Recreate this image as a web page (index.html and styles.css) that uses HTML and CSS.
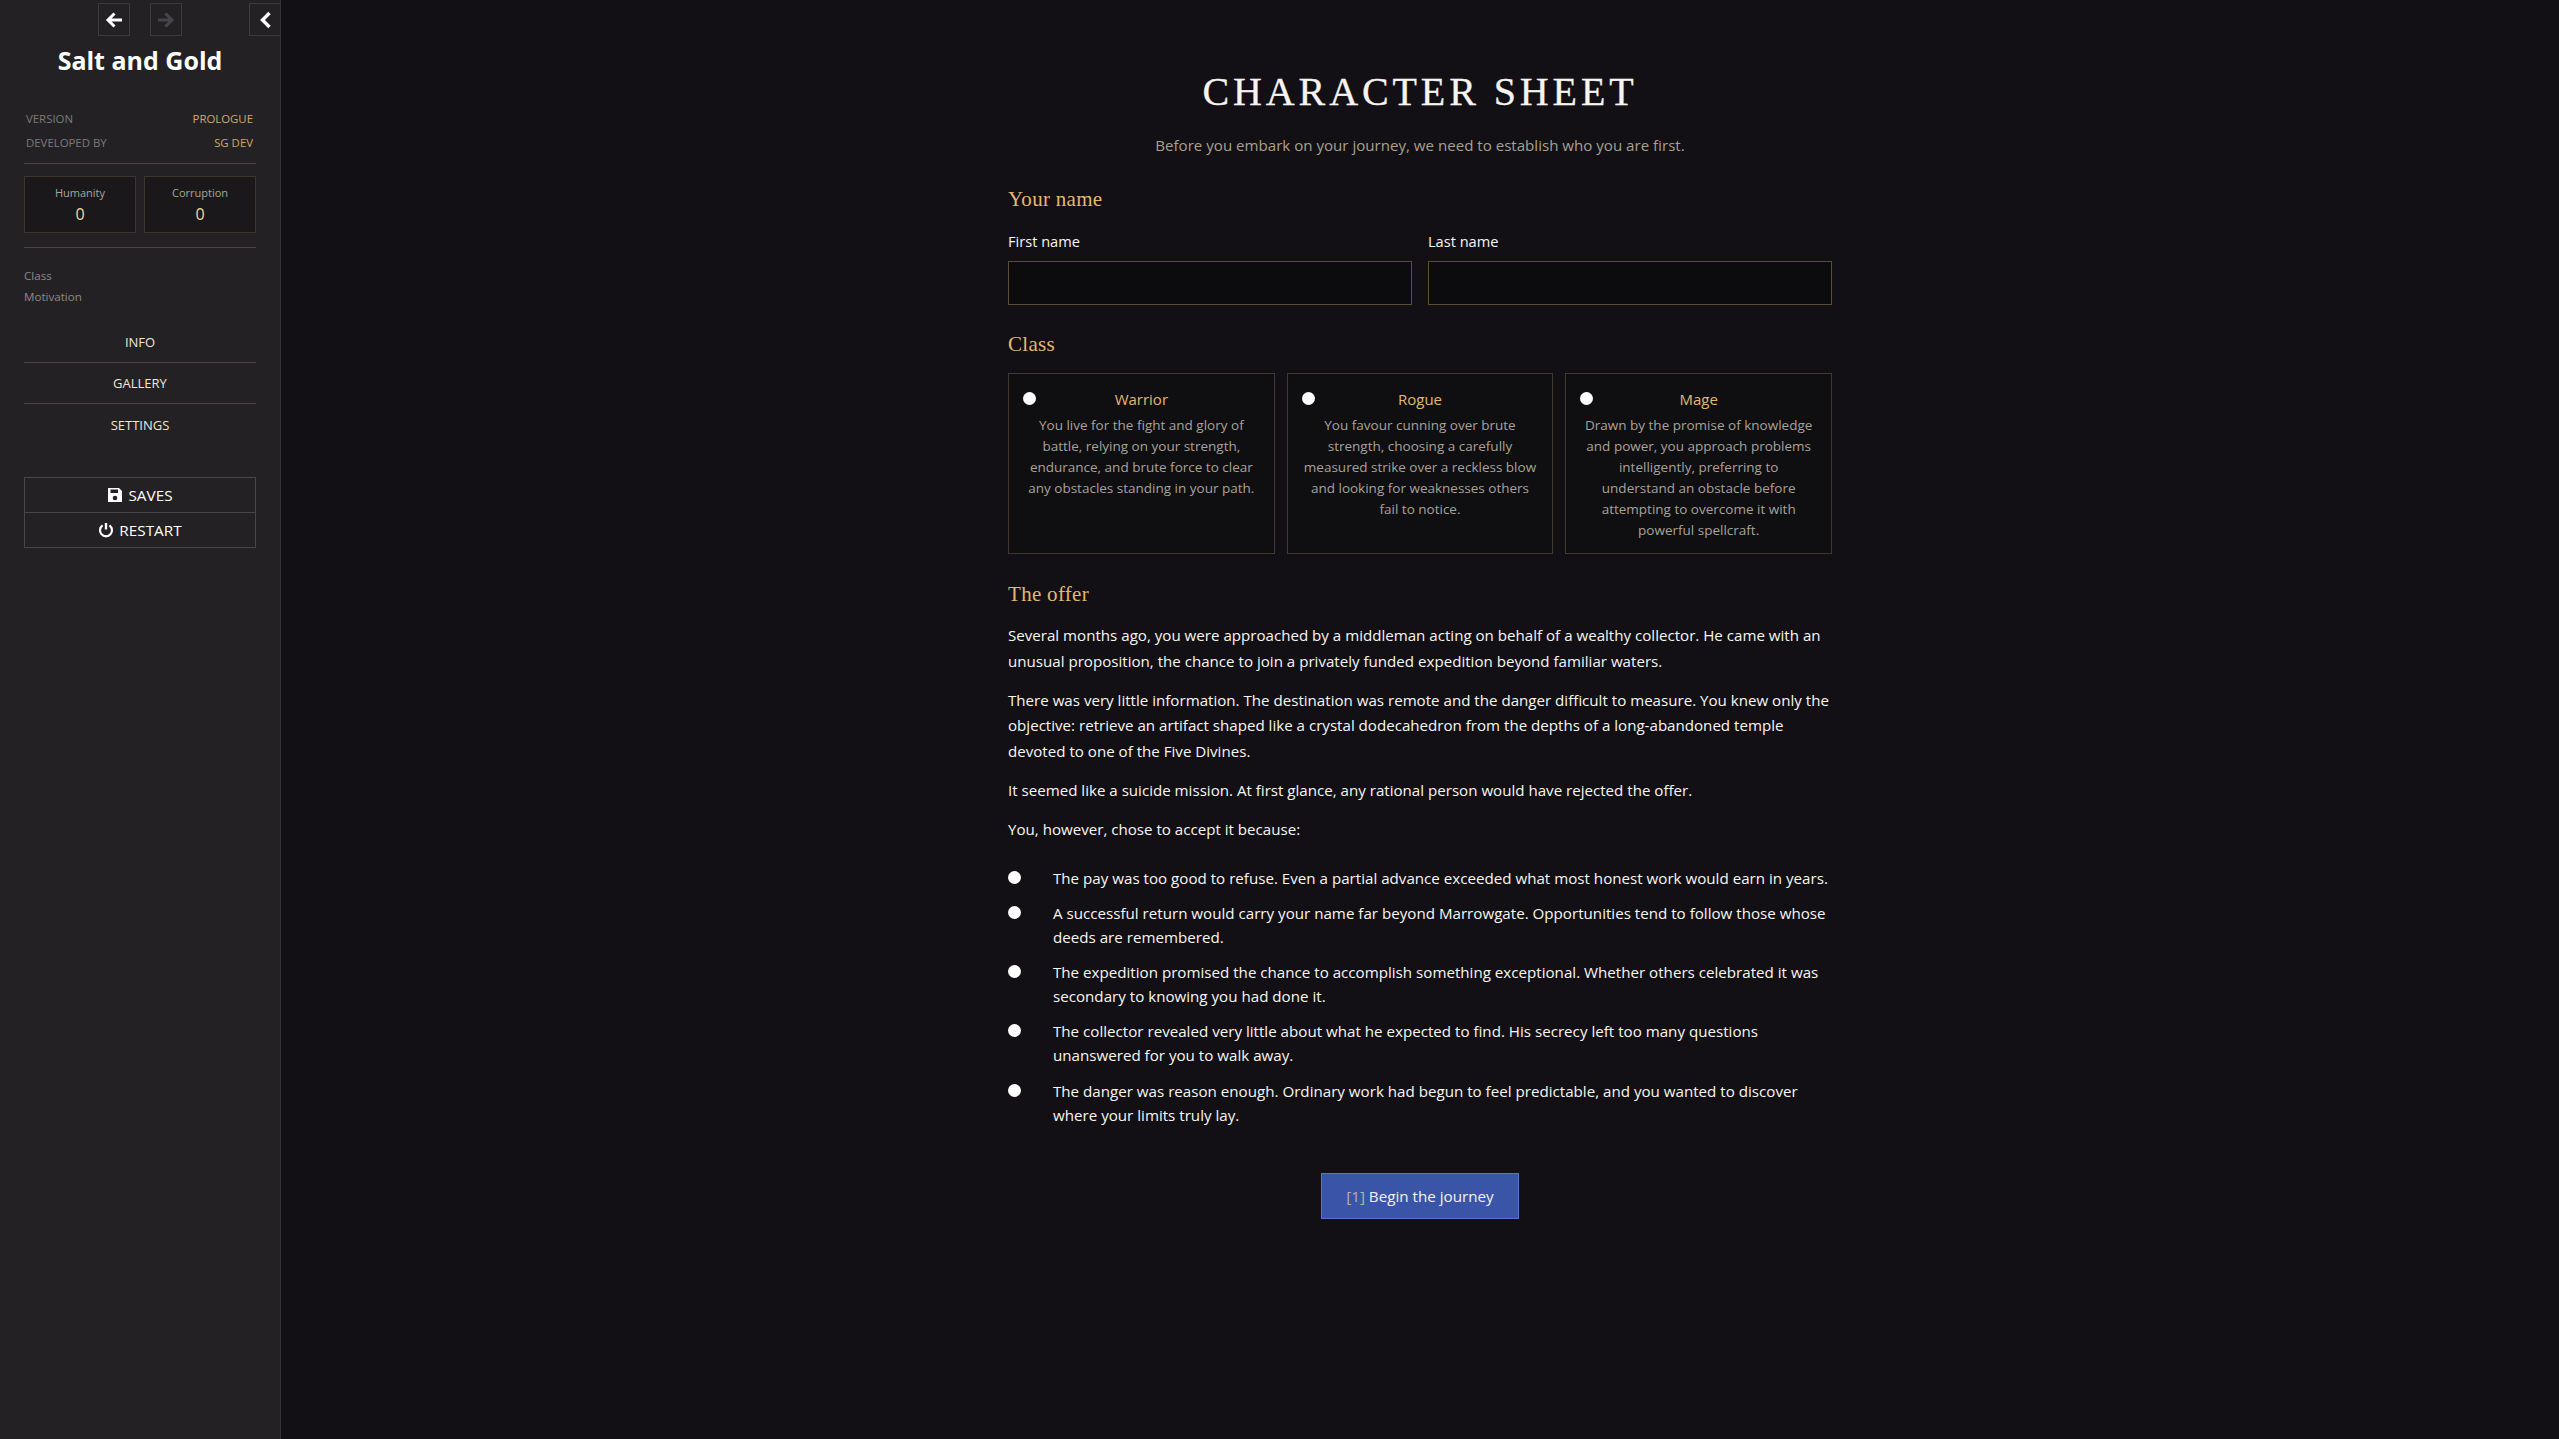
FILE: index.html
```html
<!DOCTYPE html>
<html lang="en">
<head>
<meta charset="utf-8">
<title>Salt and Gold</title>
<link rel="stylesheet" href="styles.css">
</head>
<body>
<div class="app">
  <aside class="sidebar">
    <div class="history">
      <button class="hbtn hback" aria-label="Back"><svg viewBox="0 0 20 20" class="hicon"><path d="M18 10H5M10.500 3.500L4 10L10.500 16.500" fill="none" stroke="currentColor" stroke-width="3"/></svg></button>
      <button class="hbtn hfwd" aria-label="Forward"><svg viewBox="0 0 20 20" class="hicon"><path d="M2 10H15M9.500 3.500L16 10L9.500 16.500" fill="none" stroke="currentColor" stroke-width="3"/></svg></button>
      <button class="hbtn hcollapse" aria-label="Collapse"><svg viewBox="0 0 20 20" class="hicon"><path d="M13.500 3L6.500 10L13.500 17" fill="none" stroke="currentColor" stroke-width="3.400"/></svg></button>
    </div>
    <h1 class="game-title">Salt and Gold</h1>
    <dl class="meta">
      <div class="meta-row"><dt>VERSION</dt><dd>PROLOGUE</dd></div>
      <div class="meta-row"><dt>DEVELOPED BY</dt><dd>SG DEV</dd></div>
    </dl>
    <div class="stats">
      <div class="stat"><div class="stat-label">Humanity</div><div class="stat-value">0</div></div>
      <div class="stat"><div class="stat-label">Corruption</div><div class="stat-value">0</div></div>
    </div>
    <div class="traits">
      <div>Class</div>
      <div>Motivation</div>
    </div>
    <nav class="menu">
      <a class="menu-item">INFO</a>
      <a class="menu-item">GALLERY</a>
      <a class="menu-item">SETTINGS</a>
    </nav>
    <div class="actions">
      <button class="action"><svg viewBox="0 0 16 16" class="aicon"><path fill-rule="evenodd" d="M1.500 1H12l3 3v10.500a.5.5 0 0 1-.5.5h-13a.5.5 0 0 1-.5-.5v-13a.5.5 0 0 1 .5-.5zM3.500 2.500V6h7.500V2.500zM8 8.700a2.300 2.300 0 1 0 0 4.600a2.300 2.300 0 0 0 0-4.600z" fill="currentColor"/></svg>SAVES</button>
      <button class="action"><svg viewBox="0 0 16 16" class="aicon"><path d="M4.600 3.400a6 6 0 1 0 6.800 0" fill="none" stroke="currentColor" stroke-width="2.200"/><path d="M8 1v6.500" stroke="currentColor" stroke-width="2.400" fill="none"/></svg>RESTART</button>
    </div>
  </aside>
  <main class="main">
    <div class="sheet">
      <h2 class="sheet-title">CHARACTER SHEET</h2>
      <p class="sheet-intro">Before you embark on your journey, we need to establish who you are first.</p>

      <h3 class="section first">Your name</h3>
      <div class="names">
        <label class="field"><span class="field-label">First name</span><input class="field-input" type="text"></label>
        <label class="field"><span class="field-label">Last name</span><input class="field-input" type="text"></label>
      </div>

      <h3 class="section cls">Class</h3>
      <div class="classes">
        <label class="class-card">
          <input class="radio card-radio" type="radio" name="cls">
          <span class="class-name">Warrior</span>
          <span class="class-text">You live for the fight and glory of battle, relying on your strength, endurance, and brute force to clear any obstacles standing in your path.</span>
        </label>
        <label class="class-card">
          <input class="radio card-radio" type="radio" name="cls">
          <span class="class-name">Rogue</span>
          <span class="class-text">You favour cunning over brute strength, choosing a carefully measured strike over a reckless blow and looking for weaknesses others fail to notice.</span>
        </label>
        <label class="class-card">
          <input class="radio card-radio" type="radio" name="cls">
          <span class="class-name">Mage</span>
          <span class="class-text">Drawn by the promise of knowledge and power, you approach problems intelligently, preferring to understand an obstacle before attempting to overcome it with powerful spellcraft.</span>
        </label>
      </div>

      <h3 class="section offer">The offer</h3>
      <p class="para">Several months ago, you were approached by a middleman acting on behalf of a wealthy collector. He came with an unusual proposition, the chance to join a privately funded expedition beyond familiar waters.</p>
      <p class="para">There was very little information. The destination was remote and the danger difficult to measure. You knew only the objective: retrieve an artifact shaped like a crystal dodecahedron from the depths of a long-abandoned temple devoted to one of the Five Divines.</p>
      <p class="para">It seemed like a suicide mission. At first glance, any rational person would have rejected the offer.</p>
      <p class="para">You, however, chose to accept it because:</p>

      <div class="options">
        <label class="option"><input class="radio" type="radio" name="why"><span>The pay was too good to refuse. Even a partial advance exceeded what most honest work would earn in years.</span></label>
        <label class="option"><input class="radio" type="radio" name="why"><span>A successful return would carry your name far beyond Marrowgate. Opportunities tend to follow those whose deeds are remembered.</span></label>
        <label class="option"><input class="radio" type="radio" name="why"><span>The expedition promised the chance to accomplish something exceptional. Whether others celebrated it was secondary to knowing you had done it.</span></label>
        <label class="option"><input class="radio" type="radio" name="why"><span>The collector revealed very little about what he expected to find. His secrecy left too many questions unanswered for you to walk away.</span></label>
        <label class="option"><input class="radio" type="radio" name="why"><span>The danger was reason enough. Ordinary work had begun to feel predictable, and you wanted to discover where your limits truly lay.</span></label>
      </div>

      <div class="begin-wrap"><button class="begin"><span class="begin-key">[1]</span> Begin the journey</button></div>
    </div>
  </main>
</div>
</body>
</html>
```
FILE: styles.css
```css
* { box-sizing: border-box; }
html, body { margin: 0; height: 100%; }
body { background: #121014; color: #f8f6f2; font-family: "Open Sans", "Noto Sans", sans-serif; }
button { font-family: inherit; cursor: pointer; }
.app { display: flex; height: 1439px; overflow: hidden; }

.sidebar { width: 281px; flex: none; background: #242124; border-right: 1px solid #353335; padding: 0 24px; }
.history { height: 35px; margin-top: 3px; position: relative; }
.hbtn { position: absolute; top: 0; width: 32px; height: 33px; padding: 0; background: none; border: 1px solid #3d3b40; color: #fff; display: flex; align-items: center; justify-content: center; }
.hback { left: 74px; }
.hfwd { left: 126px; color: #47454a; }
.hcollapse { left: 225px; border-right: 0; }
.hicon { width: 20px; height: 20px; }

.game-title { margin: 4px 0 0; font-size: 25px; line-height: 36px; font-weight: 700; text-align: center; color: #fff; }
.meta { margin: 29px 0 0; padding: 0 3px 8px 2px; border-bottom: 1px solid #4c453c; }
.meta-row { display: flex; justify-content: space-between; height: 24px; line-height: 24px; font-size: 11.400px; }
.meta dt { color: #7d7a78; }
.meta dd { margin: 0; color: #cba96e; }
.stats { display: grid; grid-template-columns: 112px 112px; gap: 8px; margin-top: 12px; padding-bottom: 14px; border-bottom: 1px solid #4c453c; }
.stat { height: 57px; background: #1a181b; border: 1px solid #3b352e; text-align: center; padding-top: 7px; }
.stat-label { font-size: 11px; line-height: 18px; color: #aaa59c; }
.stat-value { font-size: 16px; line-height: 24px; color: #f0d9a8; }
.traits { margin-top: 17px; font-size: 11.600px; line-height: 21px; color: #8d8a84; }
.menu { margin-top: 15px; }
.menu-item { display: block; height: 41px; line-height: 40px; text-align: center; font-size: 13px; color: #efe6d6; border-bottom: 1px solid #4c453c; }
.menu-item:last-child { border-bottom: 0; height: 42px; line-height: 42px; }
.actions { margin-top: 31px; border: 1px solid #47454a; }
.action { display: flex; align-items: center; justify-content: center; gap: 5px; width: 100%; height: 34.500px; padding: 0; background: none; border: 0; border-bottom: 1px solid #47454a; color: #fff; font-size: 15.300px; }
.action:last-child { border-bottom: 0; }
.aicon { width: 16px; height: 16px; }

.main { flex: 1; display: flex; justify-content: center; }
.sheet { width: 824px; padding-top: 68px; }
.sheet-title { margin: 0; text-align: center; font-family: "Liberation Serif", serif; font-weight: 400; font-size: 40px; line-height: 47px; letter-spacing: 3.900px; color: #f6f4f0; -webkit-text-stroke: 0.3px #f6f4f0; }
.sheet-intro { margin: 18px 0 0; text-align: center; font-size: 15.100px; line-height: 24px; color: #a8a090; }
.section { margin: 0; font-family: "Liberation Serif", serif; font-weight: 400; font-size: 21px; line-height: 28px; letter-spacing: 0.300px; color: #e2b96f; }
.section.first { margin-top: 28px; }
.section.cls { margin-top: 25px; }
.section.offer { margin-top: 26px; }
.names { display: grid; grid-template-columns: 1fr 1fr; gap: 16px; margin-top: 18px; }
.field { display: block; }
.field-label { display: block; font-size: 14.600px; line-height: 20px; color: #f8f6f2; }
.field-input { display: block; width: 100%; height: 44px; margin-top: 10px; background: #0c0b0e; border: 1px solid #5a4c35; outline: 0; color: #fff; }
.classes { display: grid; grid-template-columns: 1fr 1fr 1fr; gap: 12px; margin-top: 15px; }
.class-card { display: block; position: relative; height: 181px; background: #0f0e11; border: 1px solid #3f392f; padding: 13px 15px; text-align: center; }
.radio { appearance: none; -webkit-appearance: none; width: 13px; height: 13px; margin: 0; border-radius: 50%; background: #fff; border: 0; flex: none; }
.card-radio { position: absolute; left: 14px; top: 18px; }
.class-name { display: block; font-size: 15px; line-height: 24px; color: #e2b96f; }
.class-text { display: block; margin-top: 4px; font-size: 13.500px; line-height: 21px; color: #a8a39b; }
.para { margin: 0 0 13px; font-size: 15.120px; line-height: 25.800px; color: #f8f6f2; }
.section.offer + .para { margin-top: 15px; }
.options { margin-top: 23px; }
.option { display: flex; align-items: flex-start; gap: 32px; margin-bottom: 11.300px; font-size: 15.150px; line-height: 24px; color: #f8f6f2; }
.option .radio { margin-top: 5px; margin-left: 0; }
.begin-wrap { text-align: center; margin-top: 46px; }
.begin { width: 198px; height: 46px; background: #3a55a8; border: 1px solid #5577cc; color: #f4f2ee; font-size: 15.200px; padding: 0; }
.begin-key { color: #b8b0a0; }
```
